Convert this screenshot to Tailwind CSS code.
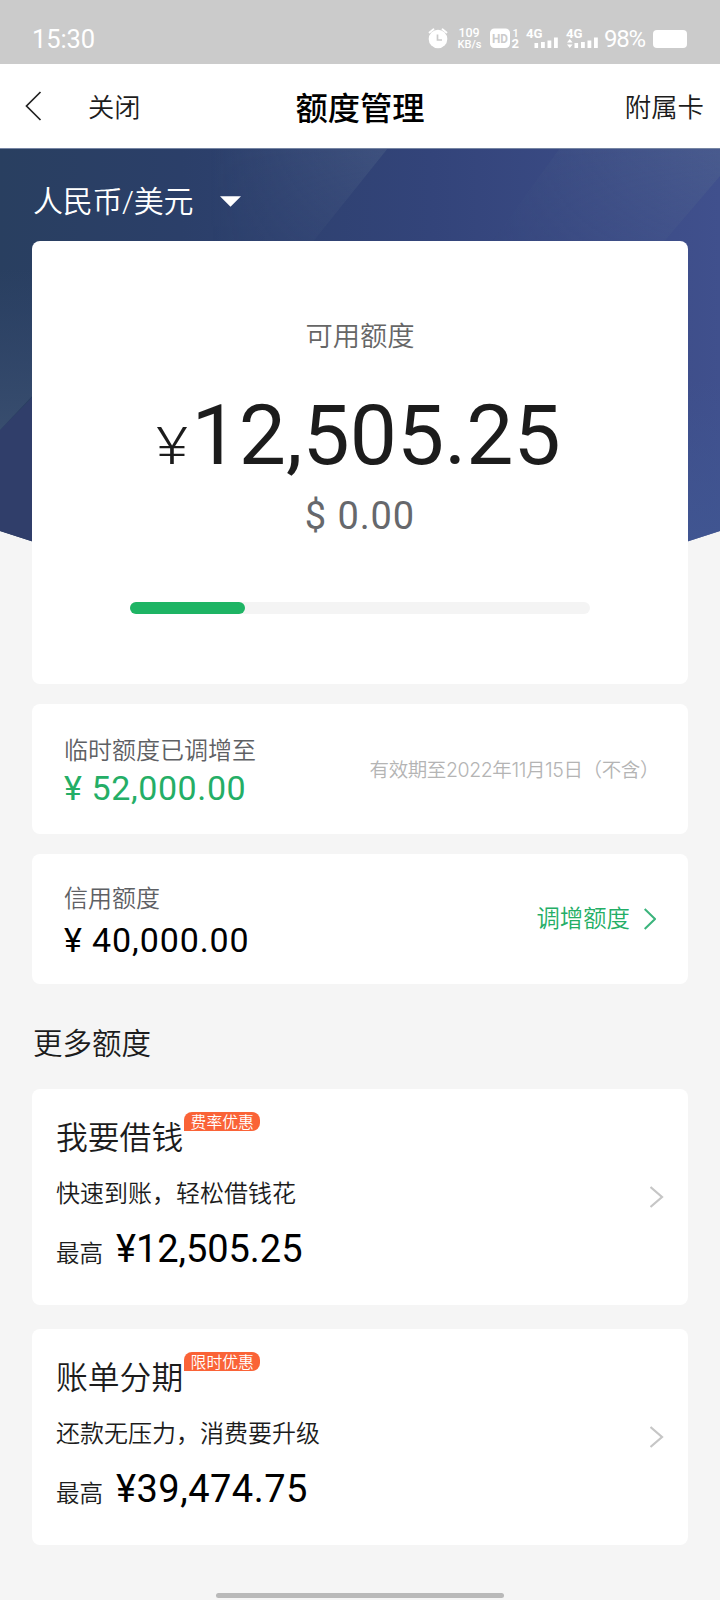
<!DOCTYPE html>
<html lang="zh-CN">
<head>
<meta charset="utf-8">
<title>额度管理</title>
<script src="https://cdn.jsdelivr.net/npm/@tailwindcss/browser@4"></script>
</head>
<body class="w-[720px] h-[1600px] overflow-hidden bg-[#f5f5f5] font-['Roboto','Noto_Sans_CJK_SC',sans-serif] font-[350] text-[#1c1c1c]">
<div class="relative flex flex-col h-[1600px]">

  <!-- Status bar -->
  <div class="h-16 shrink-0 bg-[#cbcbcb] flex items-start pt-[27px] pl-8 pr-[33px] text-white">
    <span class="text-[25.500px] leading-6 tracking-[-0.1px] flex-1 font-normal">15:30</span>
    <svg class="w-[176px] h-8 -mt-1 mr-[3px] overflow-visible" viewBox="424 23 176 32" fill="#fff">
      <circle cx="437" cy="39" r="9.300"/>
      <path d="M428.500 32.500l4-3.300M445.500 32.500l-4-3.300" stroke="#fff" stroke-width="1.800" stroke-linecap="round"/>
      <path d="M436.500 34.500v5.500h4.500" stroke="#cbcbcb" stroke-width="1.700" fill="none"/>
      <text x="457.500" y="37" font-size="12.500" font-weight="500" textLength="21">109</text>
      <text x="456.500" y="48" font-size="10.500" font-weight="500" textLength="24" lengthAdjust="spacingAndGlyphs">KB/s</text>
      <rect x="489" y="28.500" width="20" height="19.500" rx="4.500"/>
      <text x="491" y="43" font-size="12.500" font-weight="700" fill="#cbcbcb" textLength="16" lengthAdjust="spacingAndGlyphs">HD</text>
      <text x="511.500" y="36.500" font-size="11" font-weight="500">1</text>
      <text x="510.500" y="48" font-size="12" font-weight="700" textLength="7.500" lengthAdjust="spacingAndGlyphs">2</text>
      <text x="525" y="38" font-size="13.500" font-weight="700" textLength="16.500" lengthAdjust="spacingAndGlyphs">4G</text>
      <path d="M533.500 43h3.600v5h-3.600zM540 42h3.800V48h-3.800zM546.500 40.500h3.800V48h-3.800zM553 37.500h3.800V48H553z"/>
      <text x="565" y="38" font-size="13.500" font-weight="700" textLength="16.500" lengthAdjust="spacingAndGlyphs">4G</text>
      <path d="M566 42.500l2.800-3.500 2.800 3.500zM566 44.500h5.600L568.800 48z"/>
      <path d="M573.500 43h3.600v5h-3.600zM580 42h3.800V48h-3.800zM586.500 40.500h3.800V48h-3.800zM593 37.500h3.800V48H593z"/>
    </svg>
    <span class="text-[24px] leading-6 tracking-[-1.200px] w-[49px] font-normal">98%</span>
    <div class="w-[34px] h-[18px] mt-[3px] rounded-[4px] bg-white"></div>
  </div>

  <!-- Navigation -->
  <div class="h-[84px] shrink-0 bg-white flex items-center relative pl-[25px] pr-4">
    <svg class="w-[18px] h-[30px]" viewBox="0 0 18 30" fill="none" stroke="#222" stroke-width="1.700"><path d="M15.500 1L1.500 15l14 14"/></svg>
    <span class="ml-[45px] pt-1 text-[26.300px] leading-[34px]">关闭</span>
    <h1 class="absolute inset-x-0 pt-[5px] text-center text-[32.300px] leading-[34px] font-medium text-black">额度管理</h1>
    <span class="ml-auto pt-1 text-[26.400px] leading-[34px]">附属卡</span>
  </div>

  <!-- Hero backdrop -->
  <svg class="absolute left-0 top-[148px] w-[720px] h-[420px]" viewBox="0 0 720 420">
    <defs>
      <linearGradient id="base" x1="0" y1="0" x2="1" y2="0"><stop offset="0" stop-color="#293f60"/><stop offset=".25" stop-color="#2b3f69"/><stop offset=".6" stop-color="#33447a"/><stop offset="1" stop-color="#40508d"/></linearGradient>
      <linearGradient id="shard" x1="0" y1="0" x2="1" y2="0"><stop offset="0" stop-color="#5e7490" stop-opacity="0"/><stop offset="1" stop-color="#5e7490" stop-opacity=".3"/></linearGradient>
      <linearGradient id="fade" x1="0" y1="0" x2="0" y2="1"><stop offset="0" stop-color="#fff"/><stop offset="1" stop-color="#fff" stop-opacity=".3"/></linearGradient>
      <mask id="fadeDown" maskUnits="userSpaceOnUse" x="0" y="0" width="720" height="110"><rect width="720" height="110" fill="url(#fade)"/></mask>
      <linearGradient id="left" x1="0" y1="0" x2="0" y2="1"><stop offset="0" stop-color="#34496f" stop-opacity="0"/><stop offset="1" stop-color="#384d6e"/></linearGradient>
      <linearGradient id="right" x1="0" y1="0" x2="0" y2="1"><stop offset="0" stop-color="#405692" stop-opacity="0"/><stop offset="1" stop-color="#405692"/></linearGradient>
      <clipPath id="arc"><path d="M0 0H720V383Q360 505 0 383Z"/></clipPath>
    </defs>
    <g clip-path="url(#arc)">
      <rect width="720" height="420" fill="url(#base)"/>
      <path d="M0 282L130 150V420H0Z" fill="#303e6a"/>
      <path d="M0 120H34V246L0 282Z" fill="url(#left)"/>
      <g mask="url(#fadeDown)">
        <path d="M210 0H388L300 110H210Z" fill="url(#shard)"/>
        <path d="M560 0H720V28L650 110H480Z" fill="url(#shard)"/>
      </g>
      <path d="M688 230H720V420H688Z" fill="url(#right)"/>
    </g>
    <path d="M0 .5H720" stroke="#7685a3"/>
  </svg>

  <main class="relative px-8 flex flex-col">
    <div class="h-[93px] flex items-center pt-[14px] pl-px text-white">
      <span class="text-[30px] leading-9 tracking-[-0.3px]">人民币/美元</span>
      <svg class="ml-[27px] w-[21px] h-[11px]" viewBox="0 0 20 10"><path d="M0 0H20L10 10Z" fill="#fff"/></svg>
    </div>

    <section class="h-[443px] bg-white rounded-lg flex flex-col items-center pt-[78px]">
      <div class="text-[27.300px] leading-9 text-[#666]">可用额度</div>
      <div class="mt-[31px] h-[100px] flex items-baseline leading-[100px]">
        <span class="text-[51px] leading-[100px] font-[350] inline-block scale-x-120">¥</span>
        <span class="text-[84px] font-normal ml-[6px]">12,505.25</span>
      </div>
      <div class="mt-[7px] text-[38px] leading-[46px] tracking-[0.9px] font-normal text-[#66686c]">$ 0.00</div>
      <div class="mt-[63px] w-[460px] h-3 rounded-full bg-[#f4f4f4]"><div class="h-3 rounded-full bg-[#1eb464]" style="width:25%"></div></div>
    </section>

    <section class="mt-5 h-[130px] bg-white rounded-lg flex items-center justify-between pl-8 pr-[29px]">
      <div class="pt-[3px]">
        <div class="text-[24px] leading-8 text-[#5e6064]">临时额度已调增至</div>
        <div class="mt-[3px] text-[34px] leading-9 font-normal tracking-[0.600px] text-[#24ae66]">¥ 52,000.00</div>
      </div>
      <div class="font-['Inter','Noto_Sans_CJK_SC',sans-serif] text-[19.500px] leading-7 pt-px tracking-[-0.4px] text-[#b4b4b4]">有效期至2022年11月15日（不含）</div>
    </section>

    <section class="mt-5 h-[130px] bg-white rounded-lg flex items-center justify-between pl-8 pr-8">
      <div class="pt-[2px]">
        <div class="text-[24px] leading-8 text-[#5e6064]">信用额度</div>
        <div class="mt-[7px] text-[34px] leading-9 font-normal tracking-[0.900px] text-black">¥ 40,000.00</div>
      </div>
      <div class="flex items-center text-[23.400px] leading-8 text-[#24ae66]"><span>调增额度</span>
        <svg class="ml-[14px] w-3 h-[22px]" viewBox="0 0 12 22" fill="none" stroke="#3bb47c" stroke-width="2"><path d="M0.700 1L11 11L0.700 21"/></svg>
      </div>
    </section>

    <h2 class="mt-10 h-[65px] pl-px text-[29.500px] leading-10">更多额度</h2>

    <section class="h-[216px] bg-white rounded-lg flex items-center justify-between pl-6 pr-6">
      <div class="h-full pt-[23px]">
        <div class="flex items-start">
          <span class="text-[31.800px] leading-[52px]">我要借钱</span>
          <span class="w-[76px] h-[19px] ml-px bg-[#fa6337] rounded-lg rounded-bl-none text-white text-center text-[15.800px] leading-[21px]">费率优惠</span>
        </div>
        <div class="mt-[14px] text-[24px] leading-8">快速到账，轻松借钱花</div>
        <div class="mt-[16px] flex items-baseline leading-[46px]">
          <span class="text-[23.500px]">最高</span><span class="ml-[13px] text-[38px] font-normal tracking-[-0.050px] text-black">¥12,505.25</span>
        </div>
      </div>
      <svg class="w-[14px] h-[22px]" viewBox="0 0 14 22" fill="none" stroke="#c6c6c6" stroke-width="2.200"><path d="M0.500 1L12 11L0.500 21"/></svg>
    </section>

    <section class="mt-6 h-[216px] bg-white rounded-lg flex items-center justify-between pl-6 pr-6">
      <div class="h-full pt-[23px]">
        <div class="flex items-start">
          <span class="text-[31.800px] leading-[52px]">账单分期</span>
          <span class="w-[76px] h-[19px] ml-px bg-[#fa6337] rounded-lg rounded-bl-none text-white text-center text-[15.800px] leading-[21px]">限时优惠</span>
        </div>
        <div class="mt-[14px] text-[24px] leading-8">还款无压力，消费要升级</div>
        <div class="mt-[16px] flex items-baseline leading-[46px]">
          <span class="text-[23.500px]">最高</span><span class="ml-[13px] text-[38px] font-normal tracking-[0.500px] text-black">¥39,474.75</span>
        </div>
      </div>
      <svg class="w-[14px] h-[22px]" viewBox="0 0 14 22" fill="none" stroke="#c6c6c6" stroke-width="2.200"><path d="M0.500 1L12 11L0.500 21"/></svg>
    </section>
  </main>
  <div class="relative mt-auto mb-[2px] mx-auto w-[288px] h-[5px] rounded-full bg-[#b9b9b9]"></div>
</div>
</body>
</html>
